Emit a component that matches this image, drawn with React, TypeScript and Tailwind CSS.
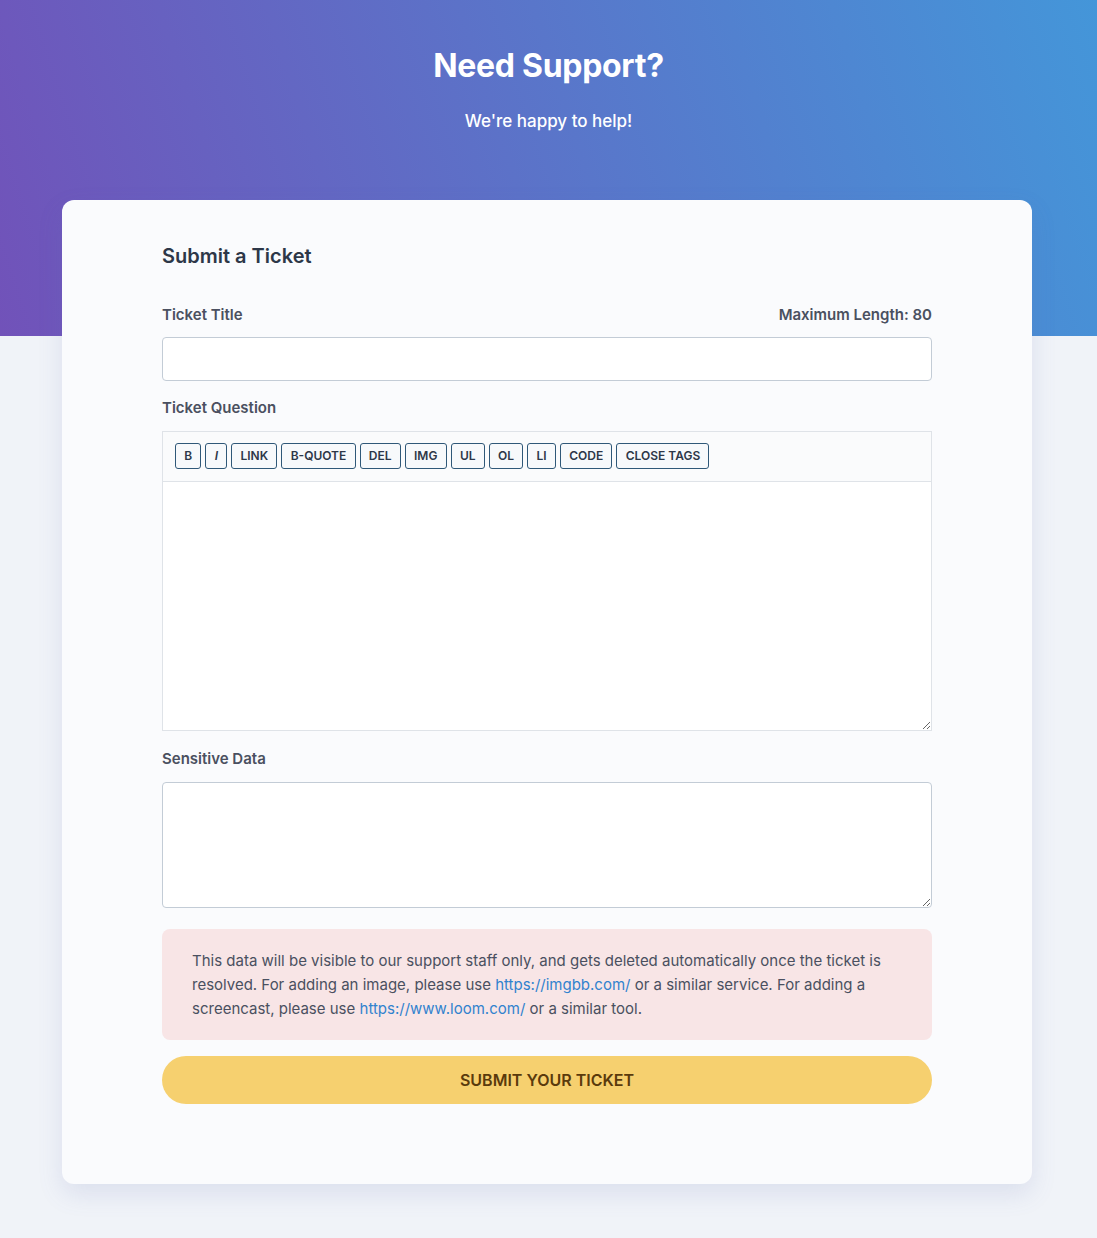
import React from "react";

const tools = ["B", "I", "LINK", "B-QUOTE", "DEL", "IMG", "UL", "OL", "LI", "CODE", "CLOSE TAGS"];

function ToolButton({ label }: { label: string }) {
  return (
    <button
      type="button"
      className={`h-[26px] px-[8.25px] rounded-[3px] border border-[#2f5878] bg-[#f7f9fb] text-[12px] font-semibold text-[#2d3748] leading-none ${
        label === "I" ? "italic" : ""
      }`}
    >
      {label}
    </button>
  );
}

export default function App() {
  return (
    <div
      className="min-h-[1238px] bg-[#f0f3f8] text-[#4a5060]"
      style={{ fontFamily: "Inter, 'Noto Sans', sans-serif" }}
    >
      <header className="h-[336px] bg-linear-[72deg] from-[#7152b9] to-[#4496d9] pt-[46px] text-center text-white">
        <h1 className="text-[32px] leading-[40px] font-bold tracking-[-0.3px]">Need Support?</h1>
        <p className="mt-[21px] text-[17px] leading-[28px] font-medium">We're happy to help!</p>
      </header>

      <main className="ml-[62px] -mt-[136px] w-[970px] rounded-[12px] bg-[#fafbfd] px-[100px] pt-[42px] pb-[80px] shadow-[0_10px_25px_rgba(100,115,180,0.15)]">
        <h2 className="text-[20px] leading-[28px] font-semibold text-[#2d3748]">Submit a Ticket</h2>

        <div className="mt-[34px] flex items-center justify-between text-[15px] leading-[22px] font-semibold">
          <label>Ticket Title</label>
          <span>Maximum Length: 80</span>
        </div>
        <input
          type="text"
          className="mt-[11px] block h-[44px] w-full rounded-[4px] border border-[#c3ccd6] bg-white px-3 outline-none"
        />

        <label className="mt-[16px] block text-[15px] leading-[22px] font-semibold">Ticket Question</label>
        <div className="mt-[12px] border border-[#dfe3e8] bg-white">
          <div className="flex gap-[4px] border-b border-[#dfe3e8] bg-[#fafbfc] px-[12px] pt-[11px] pb-[12px]">
            {tools.map((t) => (
              <ToolButton key={t} label={t} />
            ))}
          </div>
          <textarea className="block h-[248px] w-full resize-y bg-white p-3 outline-none" />
        </div>

        <label className="mt-[17px] block text-[15px] leading-[22px] font-semibold">Sensitive Data</label>
        <textarea className="mt-[12px] block h-[126px] w-full resize-y rounded-[4px] border border-[#c3ccd6] bg-white p-3 outline-none" />

        <p className="mt-[21px] rounded-[8px] bg-[#f8e5e6] px-[30px] pt-[20px] pb-[19px] text-[15px] leading-[24px] text-[#4a5060]">
          <span>
            This data will be visible to our support staff only, and gets deleted automatically once the ticket is
            resolved. For adding an image, please use{" "}
          </span>
          <a className="text-[#3182ce]">https://imgbb.com/</a>
          <span> or a similar service. For adding a screencast, please use </span>
          <a className="text-[#3182ce]">https://www.loom.com/</a>
          <span> or a similar tool.</span>
        </p>

        <button
          type="button"
          className="mt-[16px] block h-[48px] w-full rounded-full bg-[#f6d06f] text-[16px] font-semibold uppercase text-[#5a3a0c]"
        >
          Submit your ticket
        </button>
      </main>
    </div>
  );
}
